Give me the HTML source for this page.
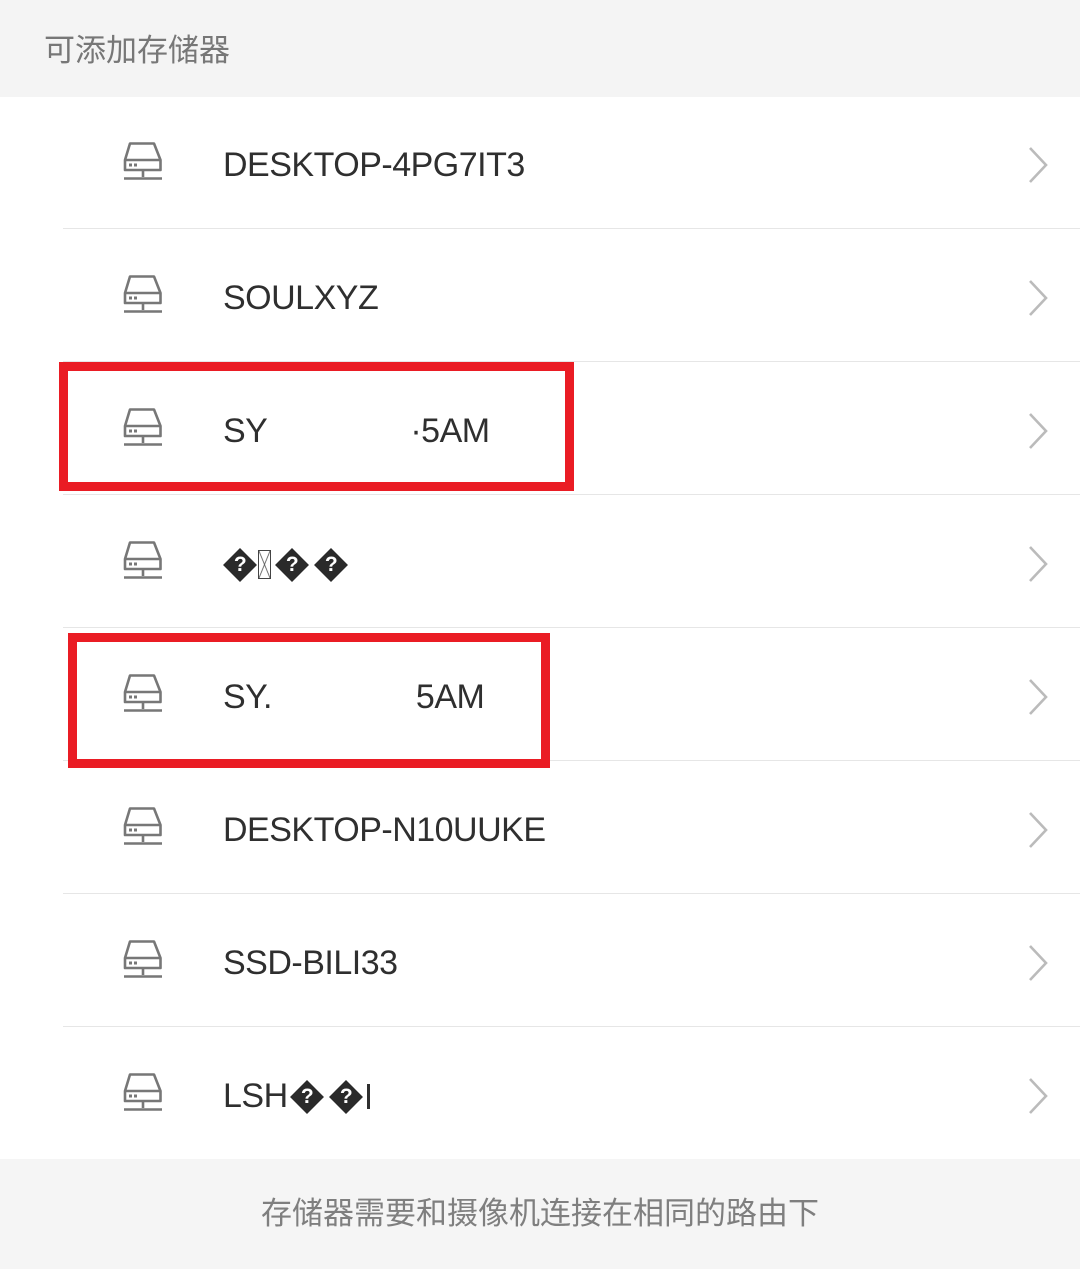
<!DOCTYPE html>
<html><head><meta charset="utf-8"><style>
*{margin:0;padding:0;box-sizing:border-box}
body{width:1080px;height:1269px;background:#fff;position:relative;overflow:hidden;font-family:"Liberation Sans","Noto Sans CJK SC",sans-serif}
.hdr{position:absolute;left:0;top:0;width:1080px;height:97px;background:#f4f4f4}
.hdr span{position:absolute;left:44px;top:31px;font-size:31px;color:#777;line-height:40px}
.row{position:absolute;left:0;width:1080px;height:0}
.row svg.ic{position:absolute;left:122px;top:-22px}
.row .t{position:absolute;left:223px;top:-21px;font-size:34px;line-height:44px;color:#2f2f2f;letter-spacing:-0.5px;white-space:nowrap}
.row svg.ch{position:absolute;left:1026px;top:-19px}
.ftr{position:absolute;left:0;top:1159px;width:1080px;height:110px;background:#f5f5f5}
.ftr span{position:absolute;left:0;width:1080px;text-align:center;top:35px;font-size:31px;color:#7f7f7f;line-height:40px}
.dq{display:inline-block;width:24px;height:24px;background:#2a2a2a;transform:rotate(45deg);margin:0 5px;vertical-align:-2px;position:relative}
.dq b{position:absolute;left:0;top:0;width:24px;height:24px;transform:rotate(-45deg);color:#fff;font-size:21px;line-height:24px;text-align:center;font-weight:bold}
.bx{display:inline-block;width:13px;height:29px;border:1px solid #444;vertical-align:-4px;margin:0 1px;background:linear-gradient(to top right,transparent 46%,#555 50%,transparent 54%),linear-gradient(to top left,transparent 46%,#555 50%,transparent 54%)}
.red{position:absolute;border:9px solid #ea1c24}
.sep{position:absolute;left:63px;right:0;height:1px;background:#e6e6e6}
</style></head><body>
<div class="hdr"><span>可添加存储器</span></div>

<div class="row" style="top:164px"><svg class="ic" width="42" height="40" viewBox="0 0 42 40"><path d="M8 1.5h24l6.5 16.5v10H3V18z M3 18h35.5" fill="none" stroke="#777" stroke-width="2.6" stroke-linejoin="round"/><rect x="7" y="21.5" width="3" height="3" fill="#777"/><rect x="12" y="21.5" width="3" height="3" fill="#777"/><path d="M21 28v7 M2 36.5h38" stroke="#777" stroke-width="2.6"/></svg><div class="t">DESKTOP-4PG7IT3</div><svg class="ch" width="24" height="40" viewBox="0 0 24 40"><path d="M4 3l16 17L4 37" fill="none" stroke="#bbb" stroke-width="2.6"/></svg></div>
<div class="row" style="top:297px"><svg class="ic" width="42" height="40" viewBox="0 0 42 40"><path d="M8 1.5h24l6.5 16.5v10H3V18z M3 18h35.5" fill="none" stroke="#777" stroke-width="2.6" stroke-linejoin="round"/><rect x="7" y="21.5" width="3" height="3" fill="#777"/><rect x="12" y="21.5" width="3" height="3" fill="#777"/><path d="M21 28v7 M2 36.5h38" stroke="#777" stroke-width="2.6"/></svg><div class="t">SOULXYZ</div><svg class="ch" width="24" height="40" viewBox="0 0 24 40"><path d="M4 3l16 17L4 37" fill="none" stroke="#bbb" stroke-width="2.6"/></svg></div>
<div class="row" style="top:430px"><svg class="ic" width="42" height="40" viewBox="0 0 42 40"><path d="M8 1.5h24l6.5 16.5v10H3V18z M3 18h35.5" fill="none" stroke="#777" stroke-width="2.6" stroke-linejoin="round"/><rect x="7" y="21.5" width="3" height="3" fill="#777"/><rect x="12" y="21.5" width="3" height="3" fill="#777"/><path d="M21 28v7 M2 36.5h38" stroke="#777" stroke-width="2.6"/></svg><div class="t">SY<span style="display:inline-block;width:143px"></span>·5AM</div><svg class="ch" width="24" height="40" viewBox="0 0 24 40"><path d="M4 3l16 17L4 37" fill="none" stroke="#bbb" stroke-width="2.6"/></svg></div>
<div class="row" style="top:563px"><svg class="ic" width="42" height="40" viewBox="0 0 42 40"><path d="M8 1.5h24l6.5 16.5v10H3V18z M3 18h35.5" fill="none" stroke="#777" stroke-width="2.6" stroke-linejoin="round"/><rect x="7" y="21.5" width="3" height="3" fill="#777"/><rect x="12" y="21.5" width="3" height="3" fill="#777"/><path d="M21 28v7 M2 36.5h38" stroke="#777" stroke-width="2.6"/></svg><div class="t"><span class="dq"><b>?</b></span><span class="bx"></span><span class="dq" style="margin-left:8px"><b>?</b></span><span class="dq" style="margin-left:10px"><b>?</b></span></div><svg class="ch" width="24" height="40" viewBox="0 0 24 40"><path d="M4 3l16 17L4 37" fill="none" stroke="#bbb" stroke-width="2.6"/></svg></div>
<div class="row" style="top:696px"><svg class="ic" width="42" height="40" viewBox="0 0 42 40"><path d="M8 1.5h24l6.5 16.5v10H3V18z M3 18h35.5" fill="none" stroke="#777" stroke-width="2.6" stroke-linejoin="round"/><rect x="7" y="21.5" width="3" height="3" fill="#777"/><rect x="12" y="21.5" width="3" height="3" fill="#777"/><path d="M21 28v7 M2 36.5h38" stroke="#777" stroke-width="2.6"/></svg><div class="t">SY.<span style="display:inline-block;width:144px"></span>5AM</div><svg class="ch" width="24" height="40" viewBox="0 0 24 40"><path d="M4 3l16 17L4 37" fill="none" stroke="#bbb" stroke-width="2.6"/></svg></div>
<div class="row" style="top:829px"><svg class="ic" width="42" height="40" viewBox="0 0 42 40"><path d="M8 1.5h24l6.5 16.5v10H3V18z M3 18h35.5" fill="none" stroke="#777" stroke-width="2.6" stroke-linejoin="round"/><rect x="7" y="21.5" width="3" height="3" fill="#777"/><rect x="12" y="21.5" width="3" height="3" fill="#777"/><path d="M21 28v7 M2 36.5h38" stroke="#777" stroke-width="2.6"/></svg><div class="t">DESKTOP-N10UUKE</div><svg class="ch" width="24" height="40" viewBox="0 0 24 40"><path d="M4 3l16 17L4 37" fill="none" stroke="#bbb" stroke-width="2.6"/></svg></div>
<div class="row" style="top:962px"><svg class="ic" width="42" height="40" viewBox="0 0 42 40"><path d="M8 1.5h24l6.5 16.5v10H3V18z M3 18h35.5" fill="none" stroke="#777" stroke-width="2.6" stroke-linejoin="round"/><rect x="7" y="21.5" width="3" height="3" fill="#777"/><rect x="12" y="21.5" width="3" height="3" fill="#777"/><path d="M21 28v7 M2 36.5h38" stroke="#777" stroke-width="2.6"/></svg><div class="t">SSD-BILI33</div><svg class="ch" width="24" height="40" viewBox="0 0 24 40"><path d="M4 3l16 17L4 37" fill="none" stroke="#bbb" stroke-width="2.6"/></svg></div>
<div class="row" style="top:1095px"><svg class="ic" width="42" height="40" viewBox="0 0 42 40"><path d="M8 1.5h24l6.5 16.5v10H3V18z M3 18h35.5" fill="none" stroke="#777" stroke-width="2.6" stroke-linejoin="round"/><rect x="7" y="21.5" width="3" height="3" fill="#777"/><rect x="12" y="21.5" width="3" height="3" fill="#777"/><path d="M21 28v7 M2 36.5h38" stroke="#777" stroke-width="2.6"/></svg><div class="t">LSH<span class="dq" style="margin-left:7px"><b>?</b></span><span class="dq" style="margin-left:10px"><b>?</b></span><span style="display:inline-block;width:3px;height:25px;background:#2f2f2f;vertical-align:-2px;margin-left:4px"></span></div><svg class="ch" width="24" height="40" viewBox="0 0 24 40"><path d="M4 3l16 17L4 37" fill="none" stroke="#bbb" stroke-width="2.6"/></svg></div>

<div class="sep" style="top:228px"></div>
<div class="sep" style="top:361px"></div>
<div class="sep" style="top:494px"></div>
<div class="sep" style="top:627px"></div>
<div class="sep" style="top:760px"></div>
<div class="sep" style="top:893px"></div>
<div class="sep" style="top:1026px"></div>

<div class="red" style="left:59px;top:362px;width:515px;height:129px"></div>
<div class="red" style="left:68px;top:633px;width:482px;height:135px"></div>

<div class="ftr"><span>存储器需要和摄像机连接在相同的路由下</span></div>
</body></html>
